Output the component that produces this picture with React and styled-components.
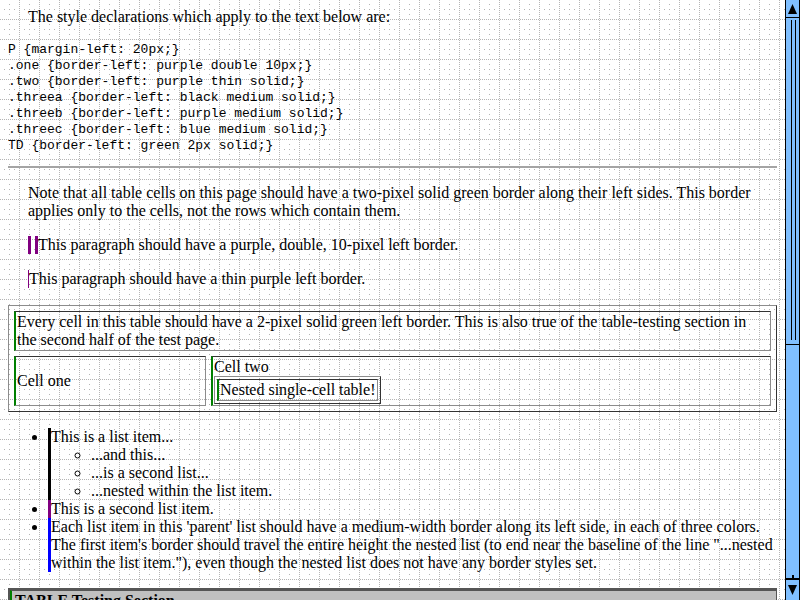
import React from 'react'
import styled, { createGlobalStyle } from 'styled-components'

const dotColor = '#b4b4b4'
const dot = `conic-gradient(from 270deg at 1px 1px, ${dotColor} 90deg, transparent 0)`

const GlobalStyle = createGlobalStyle`
  html, body {
    margin: 0;
    height: 100%;
    overflow: hidden;
  }
  body {
    background-color: #fff;
    background-image: ${dot}, ${dot}, ${dot}, ${dot}, ${dot}, ${dot}, ${dot};
    background-size: 2px 20px, 20px 2px, 20px 20px, 20px 20px, 20px 20px, 20px 20px, 20px 20px;
    background-position: 0 19px, 19px 0, 9px 4px, 4px 9px, 9px 9px, 14px 9px, 9px 14px;
    color: #000;
  }
`

const Page = styled.div`
  display: flex;
  height: 600px;
`
const Content = styled.main`
  flex: 1;
  min-width: 0;
  padding: 8px 8px 0 8px;
  overflow: hidden;
  font-family: "Liberation Serif", "Times New Roman", serif;
  font-size: 16px;
  line-height: 18px;
`
const Para = styled.p`
  margin: 0 0 16px 20px;
  border-left: ${p => p.$border || 'none'};
`
const Code = styled.pre`
  margin: 0;
  font-family: "Liberation Mono", "Courier New", monospace;
  font-size: 13px;
  line-height: 16px;
`
const Rule = styled.hr`
  margin: 12px 0 16px;
  height: 0;
  border: 0;
  border-top: 2px solid #a4a4a4;
`
const TestTable = styled.table`
  width: 100%;
  margin: 17px 0 16px;
  border: 1px solid;
  border-color: #8c8c8c #333 #333 #8c8c8c;
  border-spacing: ${p => p.$spacing}px;
  font-size: 16px;
  line-height: 18px;
`
const NestedTable = styled(TestTable)`
  width: auto;
  margin: 0;
`
const Cell = styled.td`
  padding: 1px;
  border: 1px solid;
  border-color: #333 #8c8c8c #8c8c8c #333;
  border-left: 2px solid green;
  width: ${p => (p.$width ? `${p.$width}px` : 'auto')};
`
const List = styled.ul`
  margin: 0;
  padding-left: 40px;
  list-style: ${p => p.$marker || 'disc'};
`
const Item = styled.li`
  border-left: ${p => (p.$color ? `3px solid ${p.$color}` : 'none')};
`
const SectionTable = styled.table`
  width: 100%;
  margin-top: 16px;
  border-spacing: 0;
  border-style: solid;
  border-width: 2px 1px 1px 2px;
  border-color: #555;
`
const SectionCell = styled.td`
  padding: 1px 3px;
  background: #c0c0c0;
  border-top: 1px solid #555;
  border-left: 2px solid green;
  font-weight: bold;
`

const ScrollBar = styled.div`
  flex: none;
  width: 15px;
  height: 600px;
  box-sizing: border-box;
  display: flex;
  flex-direction: column;
  background: #80bfff;
  border-left: 1px solid #000;
  border-right: 1px solid #000;
`
const ArrowButton = styled.div`
  flex: none;
  height: ${p => p.$height}px;
  box-sizing: border-box;
  display: flex;
  justify-content: center;
  align-items: center;
  border-top: ${p => (p.$top ? '2px solid #000' : 'none')};
  border-bottom: ${p => (p.$bottom ? '1px solid #000' : 'none')};
`
const Thumb = styled.div`
  flex: none;
  height: 327px;
  box-sizing: border-box;
  display: flex;
  gap: 3px;
  padding: 2px 0 4px 5px;
  border-bottom: 1px solid #000;
`
const Grip = styled.span`
  width: 1px;
  background: #000;
`
const Track = styled.div`
  flex: 1;
`
const Stem = styled.span`
  flex: none;
  align-self: center;
  width: 2px;
  height: 3px;
  background: #000;
`

const Arrow = ({ down }) => (
  <svg width="9" height="10" viewBox="0 0 9 10">
    <polygon points={down ? '0,0 9,0 4.5,10' : '4.5,0 9,10 0,10'} fill="#000" />
  </svg>
)

export default function App () {
  return (
    <Page>
      <GlobalStyle />
      <Content>
        <Para>The style declarations which apply to the text below are:</Para>
        <Code>{`P {margin-left: 20px;}
.one {border-left: purple double 10px;}
.two {border-left: purple thin solid;}
.threea {border-left: black medium solid;}
.threeb {border-left: purple medium solid;}
.threec {border-left: blue medium solid;}
TD {border-left: green 2px solid;}`}</Code>
        <Rule />
        <Para>Note that all table cells on this page should have a two-pixel solid green border along their left sides. This border applies only to the cells, not the rows which contain them.</Para>
        <Para $border="10px double purple">This paragraph should have a purple, double, 10-pixel left border.</Para>
        <Para $border="1px solid purple">This paragraph should have a thin purple left border.</Para>
        <TestTable $spacing={5}>
          <tbody>
            <tr>
              <Cell colSpan={2}>Every cell in this table should have a 2-pixel solid green left border. This is also true of the table-testing section in the second half of the test page.</Cell>
            </tr>
            <tr>
              <Cell $width={187}>Cell one</Cell>
              <Cell>
                Cell two
                <NestedTable $spacing={2}>
                  <tbody>
                    <tr>
                      <Cell>Nested single-cell table!</Cell>
                    </tr>
                  </tbody>
                </NestedTable>
              </Cell>
            </tr>
          </tbody>
        </TestTable>
        <List>
          <Item $color="black">
            This is a list item...
            <List $marker="circle">
              <li>...and this...</li>
              <li>...is a second list...</li>
              <li>...nested within the list item.</li>
            </List>
          </Item>
          <Item $color="purple">This is a second list item.</Item>
          <Item $color="blue">Each list item in this 'parent' list should have a medium-width border along its left side, in each of three colors. The first item's border should travel the entire height the nested list (to end near the baseline of the line "...nested within the list item."), even though the nested list does not have any border styles set.</Item>
        </List>
        <SectionTable>
          <tbody>
            <tr>
              <SectionCell>TABLE Testing Section</SectionCell>
            </tr>
          </tbody>
        </SectionTable>
      </Content>
      <ScrollBar>
        <ArrowButton $height={18} $bottom><Arrow /></ArrowButton>
        <Thumb><Grip /><Grip /></Thumb>
        <Track />
        <Stem />
        <ArrowButton $height={22} $top><Arrow down /></ArrowButton>
      </ScrollBar>
    </Page>
  )
}
